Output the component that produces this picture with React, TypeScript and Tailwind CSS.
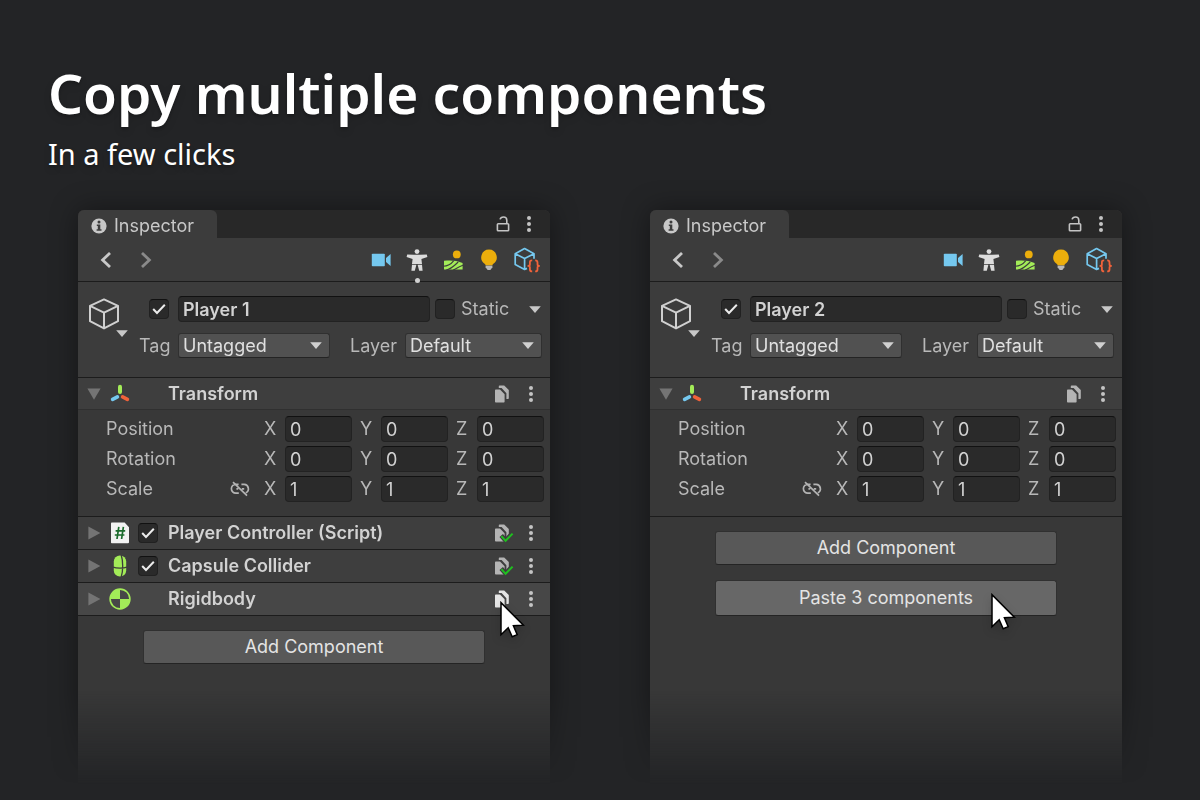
import { useState, type ReactNode } from "react";
import clsx from "clsx";

type Component = {
    name: string;
    icon: ReactNode;
    enabled?: boolean;
    copied?: boolean;
    hovered?: boolean;
};

const axes = ["X", "Y", "Z"];

const transformRows = [
    { label: "Position", value: "0" },
    { label: "Rotation", value: "0" },
    { label: "Scale", value: "1", linkable: true },
];

function InfoIcon() {
    return (
        <svg width="16" height="16" viewBox="0 0 16 16">
            <circle cx="8" cy="8" r="7.6" fill="#c8c8c8" />
            <circle cx="8" cy="4" r="1.5" fill="#3c3c3c" />
            <path d="M5.8 6.4h3.5v4.8h1.2v1.6H5.6v-1.6h1.2V8h-1z" fill="#3c3c3c" />
        </svg>
    );
}

function LockIcon() {
    return (
        <svg width="14" height="16" viewBox="0 0 14 16" fill="none" stroke="#c4c4c4" strokeWidth="1.6">
            <rect x="1.4" y="7.8" width="11.2" height="7" rx="0.8" />
            <path d="M10.8 7.8V4.2C10.8 2.2 9.6 1 7.6 1S4.4 2 4.1 3.4" />
        </svg>
    );
}

function DotsIcon() {
    return (
        <svg width="6" height="18" viewBox="0 0 6 18" fill="#c4c4c4">
            <circle cx="3" cy="3" r="2" />
            <circle cx="3" cy="9" r="2" />
            <circle cx="3" cy="15" r="2" />
        </svg>
    );
}

function Chevron({ back = false }: { back?: boolean }) {
    return (
        <svg width="12" height="16" viewBox="0 0 12 16" fill="none" stroke={back ? "#c8c8c8" : "#8a8a8a"} strokeWidth="2.8">
            <path d={back ? "M10 1 2.6 8l7.4 7" : "M2 1l7.4 7L2 15"} />
        </svg>
    );
}

function Triangle({ className }: { className?: string }) {
    return (
        <svg width="12" height="7" viewBox="0 0 12 7" className={className}>
            <path d="M0.2 0.2h11.6L6 7z" fill="currentColor" />
        </svg>
    );
}

function CameraIcon() {
    return (
        <svg width="20" height="14" viewBox="0 0 20 14" fill="#75c8ef">
            <rect x="0.8" y="0.8" width="13" height="12.4" rx="0.8" />
            <path d="M15 5 19.6 1v12L15 9z" />
        </svg>
    );
}

function AvatarIcon() {
    return (
        <svg width="22" height="22" viewBox="0 0 22 22" fill="#dcdcdc">
            <circle cx="11" cy="2.6" r="2.4" />
            <path d="M1.2 5.4 8 5.8h6l6.8-.4.6 2.6-6 2 .6 5H6l.6-5-6-2z" />
            <path d="M6 15.8h4.4l-1.6 6H5.4zM11.6 15.8H16l.6 6h-3.4z" />
        </svg>
    );
}

function TerrainIcon() {
    return (
        <svg width="20" height="20" viewBox="0 0 20 20">
            <circle cx="13.8" cy="4.4" r="3.9" fill="#ecae0c" />
            <path d="M1 10.8C7.2 10 14 10.4 19.6 13v6.6H1z" fill="#a3ec58" />
            <path d="M0 16.2c4.2-.2 8-2 10.6-5.4M3 20.2c4.6-1.2 8-4 12.2-8.2M10 20.4c3.2-1.8 6.4-3.8 10-5.2" fill="none" stroke="#3c3c3c" strokeWidth="1.1" />
        </svg>
    );
}

function BulbIcon() {
    return (
        <svg width="18" height="22" viewBox="0 0 18 22">
            <path d="M5.6 16.4h6.8v1.8L10.4 21H7.6l-2-2.8z" fill="#b8b8b8" />
            <path d="M9 .6a7.8 7.8 0 0 1 4.4 14.2c-.6.5-1 .9-1 1.4H5.6c0-.5-.4-.9-1-1.4A7.8 7.8 0 0 1 9 .6z" fill="#ecae0c" />
        </svg>
    );
}

function PrefabIcon() {
    return (
        <svg width="26" height="26" viewBox="0 0 26 26" fill="none" strokeLinejoin="round">
            <path d="M13 21.4 10.6 22.4 1.2 17.6V6.8L10.6 1.6 20 6.8v5M1.2 6.8l9.4 4.8L20 6.8M10.6 11.6v10.8" stroke="#75c8ef" strokeWidth="1.7" />
            <path d="M18.2 13.4c-2 0-2.3.8-2.3 2v1.8c0 1-.5 1.7-1.6 1.7 1.1 0 1.6.7 1.6 1.7v1.8c0 1.2.3 2 2.3 2M21.2 13.4c2 0 2.3.8 2.3 2v1.8c0 1 .5 1.7 1.6 1.7-1.1 0-1.6.7-1.6 1.7v1.8c0 1.2-.3 2-2.3 2" stroke="#f0623a" strokeWidth="1.8" />
        </svg>
    );
}

function CubeIcon() {
    return (
        <svg width="32" height="32" viewBox="0 0 32 32" fill="none" stroke="#d0d0d0" strokeWidth="2" strokeLinejoin="round">
            <path d="M16 1.4 30 7.8v15.4L16 30.4 2 23.2V7.8zM2 7.8l14 6.8 14-6.8M16 14.6v15.8" />
        </svg>
    );
}

function TransformIcon() {
    return (
        <svg width="20" height="20" viewBox="0 0 20 20" fill="none" strokeWidth="3.6">
            <path d="M10 8V2.8" stroke="#a3ec58" strokeWidth="4" strokeLinecap="round" />
            <path d="M7.4 12.8 2.6 15.4" stroke="#75c8ef" strokeLinecap="round" />
            <path d="M12.6 12.8 17.4 15.4" stroke="#f0623a" strokeLinecap="round" />
        </svg>
    );
}

function ScriptIcon() {
    return (
        <svg width="20" height="22" viewBox="0 0 20 22">
            <path d="M1.8.6h12.8l4.4 4.6v15a1 1 0 0 1-1 1H1.8a.8.8 0 0 1-.8-.8v-19a.8.8 0 0 1 .8-.8z" fill="#f2f2f2" />
            <path d="M8.8 4.8 7 17M13.4 4.8 11.6 17M5.6 8.8h9.6M4.8 13h9.6" stroke="#1b6b2c" strokeWidth="1.7" fill="none" />
        </svg>
    );
}

function CapsuleIcon() {
    return (
        <svg width="14" height="22" viewBox="0 0 14 22">
            <rect x="0.8" y="0.6" width="12.4" height="20.8" rx="6" fill="#a3ec58" />
            <path d="M0 12c3 1.6 11 1.6 14 0M8.2 0c2 6 2 16 0 22" fill="none" stroke="#3c3c3c" strokeWidth="1.3" />
        </svg>
    );
}

function RigidbodyIcon() {
    return (
        <svg width="22" height="22" viewBox="0 0 22 22" className="shrink-0">
            <circle cx="11" cy="11" r="9.9" fill="#474747" stroke="#a3ec58" strokeWidth="1.6" />
            <path d="M11 11V1.2A9.8 9.8 0 0 0 1.2 11zM11 11v9.8a9.8 9.8 0 0 0 9.8-9.8z" fill="#a3ec58" />
        </svg>
    );
}

function UnlinkIcon() {
    return (
        <svg width="20" height="16" viewBox="0 0 20 16" fill="none" stroke="#b4b4b4" strokeWidth="1.7">
            <path d="M8.6 3.4H5.8a4.4 4.4 0 0 0 0 8.8h3M11.4 3.4h2.8a4.4 4.4 0 0 1 1.6 8.4M6.4 7.8h1.8M11.8 7.8h2.4M3 1.2l14 13.4" />
        </svg>
    );
}

function CopyIcon({ copied, hovered }: { copied?: boolean; hovered?: boolean }) {
    return (
        <svg width="20" height="20" viewBox="0 0 20 20">
            <g fill={hovered ? "#e6e6e6" : "#b4b4b4"}>
                <path d="M1.8 5.6H6l4.6 4.6v7.6a.8.8 0 0 1-.8.8h-8a.8.8 0 0 1-.8-.8V6.4a.8.8 0 0 1 .8-.8z" />
                <path d="M4.8 2.2a.8.8 0 0 1 .8-.8h4.6L14.8 6v8.2a.8.8 0 0 1-.8.8h-1.6V9.2L7.6 4H4.8z" />
            </g>
            {/* the dark outline keeps the tick apart from the sheets */}
            {copied && (
                <g fill="none">
                    <path d="M7.2 12.6l4.4 5 7-7.6" stroke="#3e3e3e" strokeWidth="4.6" />
                    <path d="M7.4 13.2l4.2 4.6 7-7.2" stroke="#1fc01f" strokeWidth="2" />
                </g>
            )}
        </svg>
    );
}

function Pointer({ className }: { className?: string }) {
    return (
        <svg width="25" height="37" viewBox="0 0 25 37" className={clsx("pointer-events-none absolute z-10 drop-shadow-lg", className)}>
            <path d="M1 1.6v32.2l7.2-7 4 9 5-2.2-3.8-8.8 10-.6z" fill="#fff" stroke="#000" strokeWidth="1.5" />
        </svg>
    );
}

function Checkbox({ label, checked = false }: { label: string; checked?: boolean }) {
    const [on, setOn] = useState(checked);

    return (
        <label className="relative block size-5 shrink-0">
            <input
                type="checkbox"
                aria-label={label}
                checked={on}
                onChange={() => setOn(!on)}
                className="block size-5 appearance-none rounded-sm border border-[#212121] border-t-[#111111] bg-[#2a2a2a]"
            />
            {on && (
                <svg width="20" height="20" viewBox="0 0 20 20" className="pointer-events-none absolute inset-0">
                    <path d="M4.2 10l3.8 4 7.8-8.2" fill="none" stroke="#ececec" strokeWidth="2" />
                </svg>
            )}
        </label>
    );
}

function Dropdown({ id, value, className }: { id: string; value: string; className?: string }) {
    return (
        <div className={clsx("relative", className)}>
            <select
                id={id}
                className="block h-[25px] w-full appearance-none rounded-[3px] border border-[#303030] border-b-[#242424] bg-[#515151] pl-1 text-[#e0e0e0]"
            >
                <option>{value}</option>
            </select>
            <Triangle className="pointer-events-none absolute top-[9px] right-2 text-[#d0d0d0]" />
        </div>
    );
}

function ComponentHeader({ name, icon, enabled, copied, hovered, open = false }: Component & { open?: boolean }) {
    return (
        <div
            className={clsx(
                "flex items-center border-t border-[#1c1c1c] pr-4 pl-2",
                open ? "h-8" : "h-[33px]",
                hovered ? "bg-[#474747]" : "bg-[#3e3e3e]"
            )}
        >
            <button aria-label={`Toggle ${name}`} className="flex w-4 justify-center text-[#747474]">
                <svg width="14" height="14" viewBox="0 0 14 14" fill="currentColor">
                    <path d={open ? "M0.4 1.4h13.2L7 12.8z" : "M1.4 0.6v12.8L13.4 7z"} />
                </svg>
            </button>
            <span className="ml-2 flex w-5 justify-center">{icon}</span>
            <span className="ml-2 flex w-[30px]">
                {enabled && <Checkbox label={`${name} enabled`} checked />}
            </span>
            <h2 className="flex-1 font-semibold text-[#d2d2d2]">{name}</h2>
            <button aria-label={`Copy ${name}`} className="relative mr-3.5">
                <CopyIcon copied={copied} hovered={hovered} />
                {hovered && <Pointer className="top-3 left-1.5" />}
            </button>
            <button aria-label={`${name} menu`}>
                <DotsIcon />
            </button>
        </div>
    );
}

function Transform({ id }: { id: string }) {
    return (
        <section>
            <ComponentHeader name="Transform" icon={<TransformIcon />} open />
            <div className="flex flex-col gap-1 border-t border-[#303030] pt-1.5 pr-1.5 pb-3.5 pl-7">
                {transformRows.map((row) => (
                    <div key={row.label} className="flex items-center gap-2">
                        <span className="flex-1">{row.label}</span>
                        {row.linkable && (
                            <button aria-label="Constrain proportions" className="mr-1.5">
                                <UnlinkIcon />
                            </button>
                        )}
                        {axes.map((axis) => (
                            <div key={axis} className="flex items-center">
                                <label htmlFor={`${id}-${row.label}-${axis}`} className="w-[21px]">
                                    {axis}
                                </label>
                                <input
                                    id={`${id}-${row.label}-${axis}`}
                                    defaultValue={row.value}
                                    className="h-[26px] w-[67px] rounded-[4px] border border-[#222222] border-t-[#111111] bg-[#2a2a2a] px-1 text-[#d2d2d2]"
                                />
                            </div>
                        ))}
                    </div>
                ))}
            </div>
        </section>
    );
}

type InspectorProps = {
    id: string;
    name: string;
    avatarSelected?: boolean;
    components?: Component[];
    pasteCount?: number;
};

function Inspector({ id, name, avatarSelected, components = [], pasteCount }: InspectorProps) {
    return (
        <article className="flex flex-col rounded-t-md bg-[#383838] text-lg leading-6 text-[#b8b8b8] shadow-[0_0_28px_rgba(0,0,0,0.4)]">
            {/* Tab bar */}
            <header className="flex h-7 justify-between rounded-t-md bg-[#282828] pr-[18px]">
                <div className="flex items-center gap-[7px] rounded-t-md bg-[#3c3c3c] pt-1 pr-[23px] pl-[13px] text-[#c8c8c8]">
                    <InfoIcon />
                    Inspector
                </div>
                <div className="flex items-center gap-4">
                    <button aria-label="Lock">
                        <LockIcon />
                    </button>
                    <button aria-label="Tab menu">
                        <DotsIcon />
                    </button>
                </div>
            </header>

            {/* Toolbar */}
            <nav className="flex h-11 items-center border-b border-[#1c1c1c] bg-[#3c3c3c] pr-[7px] pl-[22px]">
                <button aria-label="Back" className="mr-7">
                    <Chevron back />
                </button>
                <button aria-label="Forward" className="mr-auto">
                    <Chevron />
                </button>
                <button aria-label="Camera" className="flex w-9 justify-center">
                    <CameraIcon />
                </button>
                <button aria-label="Avatar" className="relative flex w-9 justify-center">
                    <AvatarIcon />
                    {avatarSelected && <span className="absolute -bottom-3 size-[5px] rounded-full bg-[#d0d0d0]" />}
                </button>
                <button aria-label="Terrain" className="flex w-9 justify-center">
                    <TerrainIcon />
                </button>
                <button aria-label="Light" className="flex w-9 justify-center">
                    <BulbIcon />
                </button>
                <button aria-label="Prefab" className="flex w-9 justify-end pr-[3px]">
                    <PrefabIcon />
                </button>
            </nav>

            {/* Game object */}
            <div className="flex bg-[#3c3c3c] pt-3.5 pr-2 pb-[19px] pl-2.5">
                <button aria-label="Object icon" className="relative mt-0.5 h-8 w-[42px] text-[#c8c8c8]">
                    <CubeIcon />
                    <Triangle className="absolute top-8 left-7" />
                </button>
                <div className="flex flex-1 flex-col gap-[11px]">
                    <div className="flex items-center">
                        <span className="ml-[19px]">
                            <Checkbox label={`${name} active`} checked />
                        </span>
                        <input
                            aria-label="Object name"
                            defaultValue={name}
                            className="mr-[5px] ml-[9px] h-[26px] w-0 min-w-0 flex-1 rounded-[4px] border border-[#222222] border-t-[#111111] bg-[#2a2a2a] px-1 font-semibold text-[#d2d2d2]"
                        />
                        <Checkbox label="Static" />
                        <span className="ml-1.5 w-[68px]">Static</span>
                        <button aria-label="Static options" className="mr-px text-[#c8c8c8]">
                            <Triangle />
                        </button>
                    </div>
                    <div className="flex items-center">
                        <label htmlFor={`${id}-tag`} className="ml-[9px] w-[39px]">
                            Tag
                        </label>
                        <Dropdown id={`${id}-tag`} value="Untagged" className="min-w-0 flex-1" />
                        <label htmlFor={`${id}-layer`} className="ml-5 w-[55px]">
                            Layer
                        </label>
                        <Dropdown id={`${id}-layer`} value="Default" className="w-[137px]" />
                    </div>
                </div>
            </div>

            <Transform id={id} />
            {components.map((component) => (
                <ComponentHeader key={component.name} {...component} />
            ))}

            <div className="flex flex-col items-center gap-[15px] border-t border-[#1c1c1c] pt-3.5">
                <button className="h-[34px] w-[342px] rounded-[3px] border border-[#303030] border-b-[#242424] bg-[#585858] text-[#e4e4e4]">
                    Add Component
                </button>
                {pasteCount && (
                    <button className="relative h-9 w-[342px] rounded-[3px] border border-[#303030] border-b-[#242424] bg-[#676767] text-[#e4e4e4]">
                        Paste {pasteCount} components
                        <Pointer className="top-3 right-10" />
                    </button>
                )}
            </div>
        </article>
    );
}

const playerComponents: Component[] = [
    { name: "Player Controller (Script)", icon: <ScriptIcon />, enabled: true, copied: true },
    { name: "Capsule Collider", icon: <CapsuleIcon />, enabled: true, copied: true },
    { name: "Rigidbody", icon: <RigidbodyIcon />, hovered: true },
];

export default function App() {
    return (
        <main className="flex min-h-screen flex-col bg-[#232426] font-['Inter',sans-serif]">
            <header className="px-12 pt-[60px] font-['Noto_Sans',sans-serif] text-white text-shadow-lg">
                <h1 className="text-[55px] leading-[66px] font-semibold">Copy multiple components</h1>
                <p className="pt-0.5 text-[29px] leading-[52px]">In a few clicks</p>
            </header>
            {/* Both panels fade out towards the bottom of the page */}
            <div className="grid flex-1 grid-cols-2 gap-[100px] px-[78px] pt-[30px] [mask-image:linear-gradient(to_bottom,black_calc(100%-110px),transparent_calc(100%-16px))]">
                <Inspector id="player-1" name="Player 1" avatarSelected components={playerComponents} />
                <Inspector id="player-2" name="Player 2" pasteCount={3} />
            </div>
        </main>
    );
}
